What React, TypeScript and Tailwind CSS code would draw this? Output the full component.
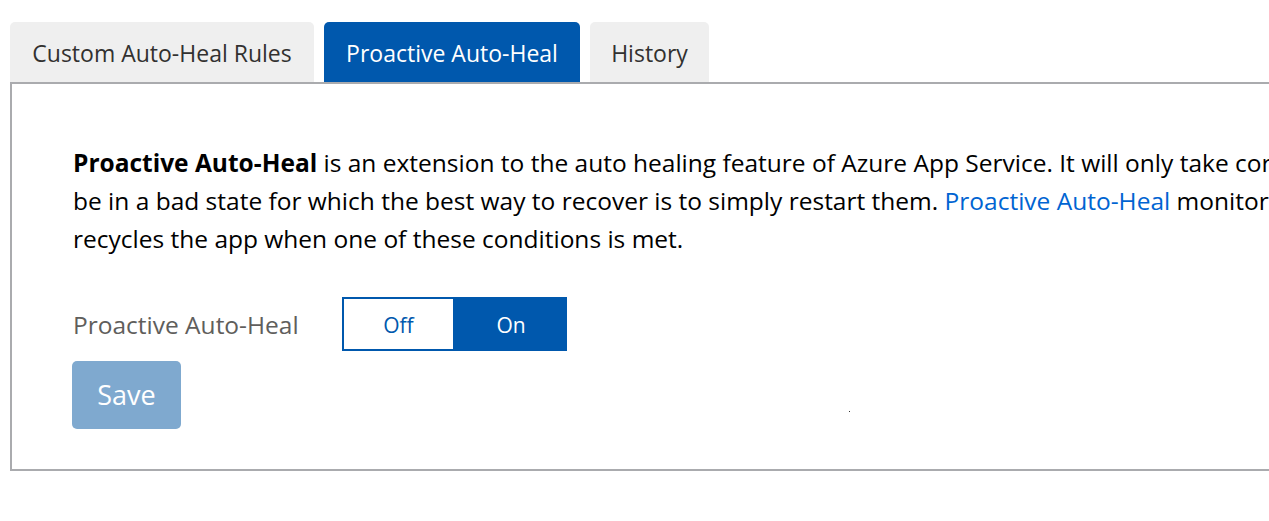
import { useState } from 'react';

const tabs = [
  { label: 'Custom Auto-Heal Rules', w: 'w-[304px]' },
  { label: 'Proactive Auto-Heal', w: 'w-[256px]' },
  { label: 'History', w: 'w-[119px]' },
];

export default function App() {
  const [active, setActive] = useState(1);
  const [enabled, setEnabled] = useState(true);

  return (
    <div className="w-[1269px] h-[521px] overflow-hidden bg-white font-['Open_Sans',sans-serif]">
      <div className="pt-[22px] pl-[10px] w-[1700px]">
        {/* tab strip */}
        <div className="flex gap-[10px]">
          {tabs.map((t, i) => (
            <button
              key={t.label}
              onClick={() => setActive(i)}
              className={
                t.w +
                (i === active
                  ? ' h-[60px] pt-[3px] rounded-t-[5px] bg-[#0058ad] text-white text-[23px] whitespace-nowrap'
                  : ' h-[60px] pt-[3px] rounded-t-[5px] bg-[#efefef] text-[#323130] text-[23px] whitespace-nowrap')
              }
            >
              {t.label}
            </button>
          ))}
        </div>

        {/* panel */}
        <div className="border-2 border-[#aaabae] h-[389px] pl-[61px] pt-[60px]">
          <p className="text-[24.5px] leading-[38px] text-black whitespace-nowrap">
            <b className="font-bold">Proactive Auto-Heal</b> is an extension to the auto healing feature of Azure App Service. It will only take corrective actions for apps that may
            <br />
            be in a bad state for which the best way to recover is to simply restart them.{' '}
            <a className="text-[#0064d2]" href="#">Proactive Auto-Heal</a> monitors CPU and memory usage of the app and
            <br />
            recycles the app when one of these conditions is met.
          </p>

          <div className="flex items-center mt-[39px]">
            <span className="w-[269px] pt-[2px] text-[24.5px] text-[#605e5c]">Proactive Auto-Heal</span>
            <div className="flex">
              <button
                onClick={() => setEnabled(false)}
                className={
                  enabled
                    ? 'w-[113px] h-[54px] pt-[3px] border-2 border-[#0058ad] bg-white text-[#0058ad] text-[21px]'
                    : 'w-[113px] h-[54px] pt-[3px] border-2 border-[#0058ad] bg-[#0058ad] text-white text-[21px]'
                }
              >
                Off
              </button>
              <button
                onClick={() => setEnabled(true)}
                className={
                  enabled
                    ? 'w-[112px] h-[54px] pt-[3px] border-2 border-[#0058ad] bg-[#0058ad] text-white text-[21px]'
                    : 'w-[112px] h-[54px] pt-[3px] border-2 border-[#0058ad] bg-white text-[#0058ad] text-[21px]'
                }
              >
                On
              </button>
            </div>
          </div>

          <div className="flex items-start mt-[10px]">
            <button className="-ml-px w-[109px] h-[68px] rounded-[5px] bg-[#7fa9cf] text-white text-[27px]">
              Save
            </button>
            <span className="ml-[668px] mt-[50px] w-px h-px bg-[#333]" />
          </div>
        </div>
      </div>
    </div>
  );
}
